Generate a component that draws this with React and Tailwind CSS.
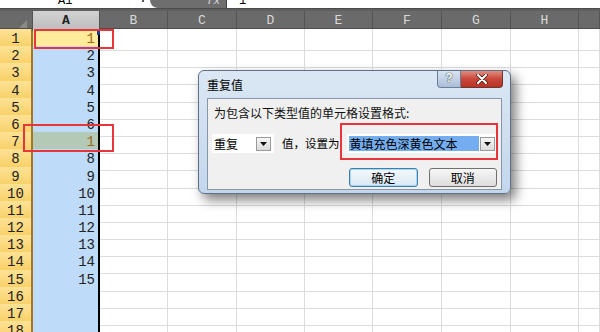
import React from "react";

const colLetters = ["A", "B", "C", "D", "E", "F", "G", "H", ""];
const gridCols = "grid grid-cols-[33px_67px_68px_69px_68px_68px_69px_69px_68px_1fr]";
const rows = Array.from({ length: 18 }, (_, i) => i + 1);

const values = { 1: 1, 2: 2, 3: 3, 4: 4, 5: 5, 6: 6, 7: 1, 8: 8, 9: 9, 10: 10, 11: 11, 12: 12, 13: 13, 14: 14, 15: 15 };

const mono = { fontFamily: '"Liberation Mono", "DejaVu Sans Mono", monospace' };
const cjk = { fontFamily: '"Noto Sans CJK SC", "Noto Sans", sans-serif' };

const DropArrow = () => (
  <div className="w-[15px] h-[14px] border border-[#9a9a9a] bg-gradient-to-b from-[#f6f6f6] to-[#dcdcdc] flex items-center justify-center">
    <svg width="7" height="4" viewBox="0 0 7 4">
      <path d="M0 0 H7 L3.5 4 Z" fill="#111" />
    </svg>
  </div>
);

const Dialog = () => (
  <div className="absolute left-[198px] top-[70px] w-[313px] h-[124px] rounded-[6px] border border-[#5d7088] bg-gradient-to-b from-[#dbe7f4] via-[#cfdff0] to-[#c3d6ec] shadow-[5px_6px_12px_rgba(0,0,0,0.5)]">
    {/* title bar */}
    <div className="flex items-start h-[27px]">
      <div className="pl-[8px] pt-[5px] text-[12px] text-black" style={cjk}>
        重复值
      </div>
      <div className="ml-auto mr-[7px] flex">
        <div className="w-[24px] h-[17px] border border-t-0 border-[#6b7f99] rounded-bl-[4px] bg-gradient-to-b from-[#d9e4f1] to-[#a9bed8] flex items-center justify-center text-[12px] font-bold text-white [text-shadow:0_0_1px_#233,0_0_1px_#233]" style={mono}>
          ?
        </div>
        <div className="w-[42px] h-[17px] border border-t-0 border-l-0 border-[#6b3530] rounded-br-[4px] bg-gradient-to-b from-[#e08e7f] via-[#c9463a] to-[#b83225] flex items-center justify-center">
          <svg width="12" height="10" viewBox="0 0 12 10">
            <path d="M2 1 L10 9 M10 1 L2 9" stroke="#3a1a16" strokeWidth="3.4" strokeLinecap="round" />
            <path d="M2 1 L10 9 M10 1 L2 9" stroke="#fff" strokeWidth="2" strokeLinecap="round" />
          </svg>
        </div>
      </div>
    </div>
    {/* body */}
    <div className="mx-[8px] h-[92px] border border-[#8796a8] bg-[#f0f0f0] px-[4px] pt-[5px]" style={cjk}>
      <div className="pl-[2px] text-[12px] leading-[18px] text-[#111] whitespace-nowrap">为包含以下类型值的单元格设置格式:</div>
      <div className="flex items-center mt-[12px] h-[19px]">
        <div className="shrink-0 w-[62px] h-[19px] bg-white flex items-center pl-[2px] pr-[3px]">
          <span className="text-[12px] text-black">重复</span>
          <div className="ml-auto">
            <DropArrow />
          </div>
        </div>
        <span className="shrink-0 ml-[8px] text-[11.5px] text-black whitespace-nowrap">值，设置为</span>
        <div className="relative shrink-0 ml-[7px] w-[150px] h-[19px] bg-white flex items-center pl-[2px] pr-[2px]">
          <div className="w-[131px] h-[15px] bg-[#75aef0] flex items-center pl-[1px] text-[12px] text-black whitespace-nowrap">
            黄填充色深黄色文本
          </div>
          <div className="ml-[1px]">
            <DropArrow />
          </div>
          <div className="absolute left-[-7px] top-[-11px] w-[158px] h-[37px] border-2 border-[#e8343b]" />
        </div>
      </div>
      <div className="flex mt-[15px] pl-[137px] gap-[11px]">
        <button className="w-[69px] h-[19px] rounded-[3px] border border-[#3c7fb1] bg-gradient-to-b from-[#f4f9fd] to-[#dbe8f3] text-[12px] text-black shadow-[inset_0_0_0_1px_#a6d6f5]">
          确定
        </button>
        <button className="w-[69px] h-[19px] rounded-[3px] border border-[#707070] bg-gradient-to-b from-[#f6f6f6] to-[#dddddd] text-[12px] text-black">
          取消
        </button>
      </div>
    </div>
  </div>
);

export default function App() {
  return (
    <div className="relative w-[600px] h-[332px] overflow-hidden bg-white">
      {/* formula bar (cut off at top) */}
      <div className="flex h-[9px] border-b border-[#4a4a4a] bg-white overflow-hidden">
        <div className="w-[150px] relative">
          <span className="absolute left-[58px] top-[-8px] text-[12px] text-black" style={mono}>A1</span>
          <span className="absolute left-[142px] top-[0px] w-[2px] h-[2px] bg-[#555]" />
        </div>
        <div className="w-[76px] bg-[#6e6e6e] rounded-bl-[10px] relative">
          <span className="absolute right-[6px] top-[-7px] text-[11px] italic text-[#ddd]" style={mono}>fx</span>
        </div>
        <div className="flex-1 relative border-l border-[#444]">
          <span className="absolute left-[12px] top-[-8px] text-[12px] text-black" style={mono}>1</span>
        </div>
      </div>
      <div className="h-[2px] bg-[#5f5f5f]" />

      {/* column headers */}
      <div className={`${gridCols} h-[18px] bg-[#6a6a6a] border-b border-[#4d4d4d]`}>
        <div className="relative border-r border-[#545454]">
          <svg className="absolute right-[5px] bottom-[3px]" width="8" height="8" viewBox="0 0 8 8">
            <path d="M8 0 V8 H0 Z" fill="#8a8a8a" />
          </svg>
        </div>
        {colLetters.map((c, i) => (
          <div
            key={i}
            className={`flex items-center justify-center border-r text-[13px] ${
              c === "A"
                ? "bg-gradient-to-b from-[#d2d2d2] to-[#bcbcbc] text-[#222] font-bold border-[#545454]"
                : "text-[#d9d9d9] border-[#545454]"
            }`}
            style={mono}
          >
            {c}
          </div>
        ))}
      </div>

      {/* rows */}
      {rows.map((r) => (
        <div key={r} className={`${gridCols} h-[17.2px]`}>
          <div
            className="flex items-center justify-center bg-gradient-to-b from-[#fde296] to-[#f7cd5c] border-r-2 border-b border-r-[#a0782c] border-b-[#e3b955] text-[14px] text-[#222]"
            style={mono}
          >
            {r}
          </div>
          <div
            className={`relative flex items-center justify-end pr-[3px] border-r-2 border-r-black border-b text-[14px] ${
              r === 1
                ? "bg-[#ffeb9c] text-[#a06a10] border-b-[#d8d0a8]"
                : r === 7
                ? "bg-[#b4c9b6] text-[#9a6a20] border-b-[#a9bfd5]"
                : "bg-[#bedcfa] text-[#222] border-b-[#a9c6e2]"
            }`}
            style={mono}
          >
            {values[r] ?? ""}
            {r === 1 && <span className="absolute right-[-2px] top-[1px] w-[3px] h-[5px] bg-[#1b3c8c]" />}
          </div>
          {colLetters.slice(1).map((c, i) => (
            <div key={i} className="border-r border-b border-[#dadcdd]" />
          ))}
        </div>
      ))}

      {/* annotation boxes */}
      <div className="absolute left-[34px] top-[29px] w-[80px] h-[20px] border-2 border-[#e8343b]" />
      <div className="absolute left-[23px] top-[124px] w-[91px] h-[28px] border-2 border-[#e8343b]" />

      <Dialog />
    </div>
  );
}
